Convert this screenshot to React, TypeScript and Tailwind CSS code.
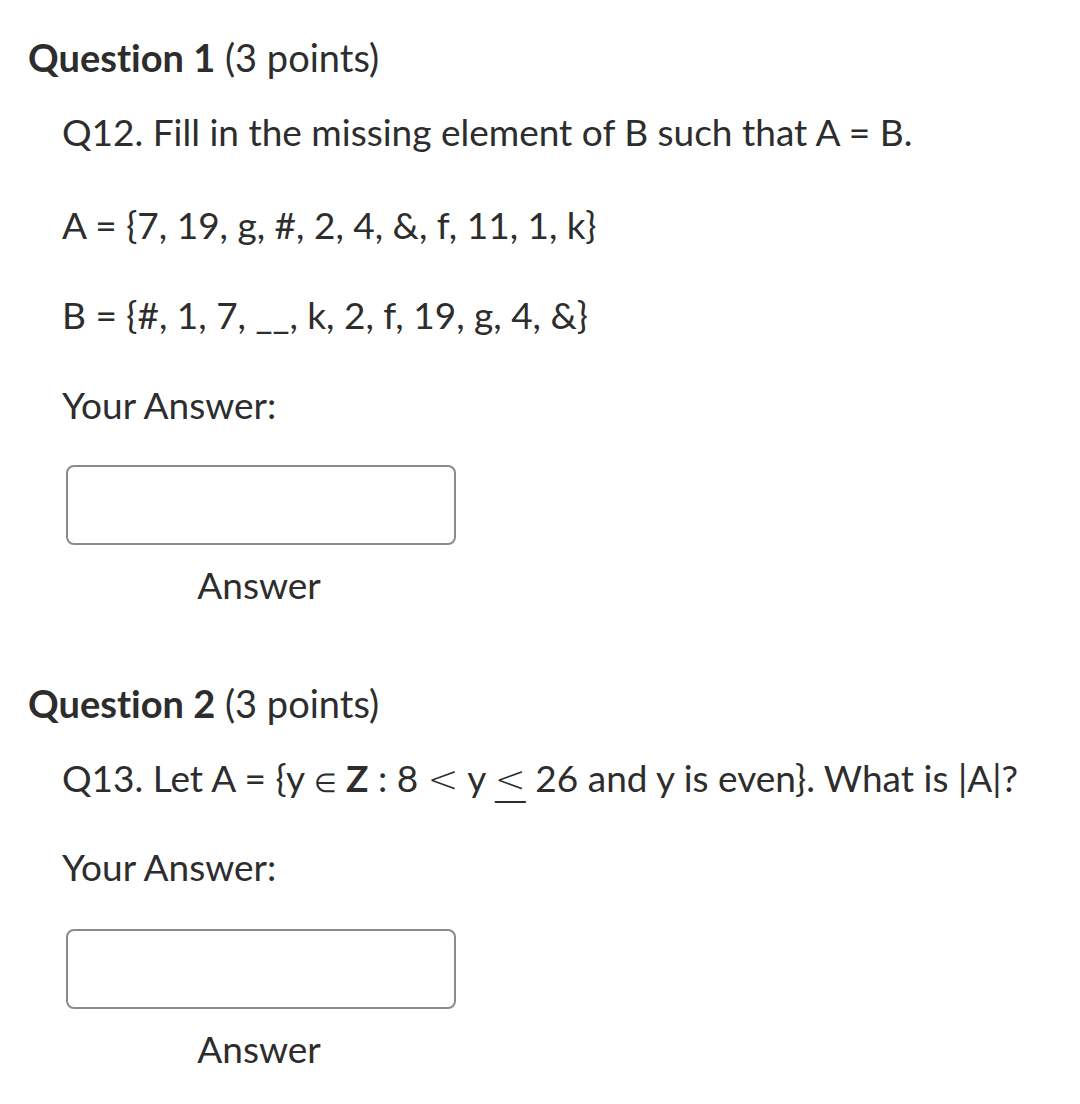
const QuizPage = () => {
  return (
    <div className="min-h-screen bg-white text-[#2d2d2d] font-['Lato','Liberation_Sans',sans-serif] [font-variant-ligatures:none] pl-[28px] pt-[37px]">
      <h2 className="text-[38px] leading-[40px]">
        <span className="font-bold">Question 1</span> (3 points)
      </h2>
      <div className="pl-[34px] text-[37px] leading-[40px]">
        <p className="mt-[35px]">Q12. Fill in the missing element of B such that A = B.</p>
        <p className="mt-[53px]">A = {"{"}7, 19, g, #, 2, 4, &amp;, f, 11, 1, k{"}"}</p>
        <p className="mt-[50px]">B = {"{"}#, 1, 7, __, k, 2, f, 19, g, 4, &amp;{"}"}</p>
        <p className="mt-[50px]">Your Answer:</p>
        <div className="mt-[40px] w-[390px] pl-[4px]">
          <input
            type="text"
            className="block h-[80px] w-[390px] rounded-lg border-2 border-[#8b8b8b] bg-white"
          />
          <p className="mt-[20px] text-center">Answer</p>
        </div>
      </div>

      <h2 className="mt-[78px] text-[38px] leading-[40px]">
        <span className="font-bold">Question 2</span> (3 points)
      </h2>
      <div className="pl-[34px] text-[37px] leading-[40px]">
        <p className="mt-[35px] whitespace-nowrap">
          Q13. Let A = {"{"}y <span className="text-[26px]">∈</span>{" "}
          <span className="font-bold">Z</span> : 8{" "}
          <span className="font-['DejaVu_Sans_ExtraLight','DejaVu_Sans',sans-serif] font-extralight text-[37px] leading-[40px]">
            &lt;
          </span>{" "}
          y{" "}
          <span className="font-['DejaVu_Sans_ExtraLight','DejaVu_Sans',sans-serif] font-extralight text-[37px] leading-[40px] underline underline-offset-[9px] decoration-[2px]">
            &lt;
          </span>{" "}
          26 and y is even{"}"}. What is |A|?
        </p>
        <p className="mt-[45px]">Your Answer:</p>
        <div className="mt-[42px] w-[390px] pl-[4px]">
          <input
            type="text"
            className="block h-[80px] w-[390px] rounded-lg border-2 border-[#8b8b8b] bg-white"
          />
          <p className="mt-[20px] text-center">Answer</p>
        </div>
      </div>
    </div>
  );
};

export default function App() {
  return <QuizPage />;
}
